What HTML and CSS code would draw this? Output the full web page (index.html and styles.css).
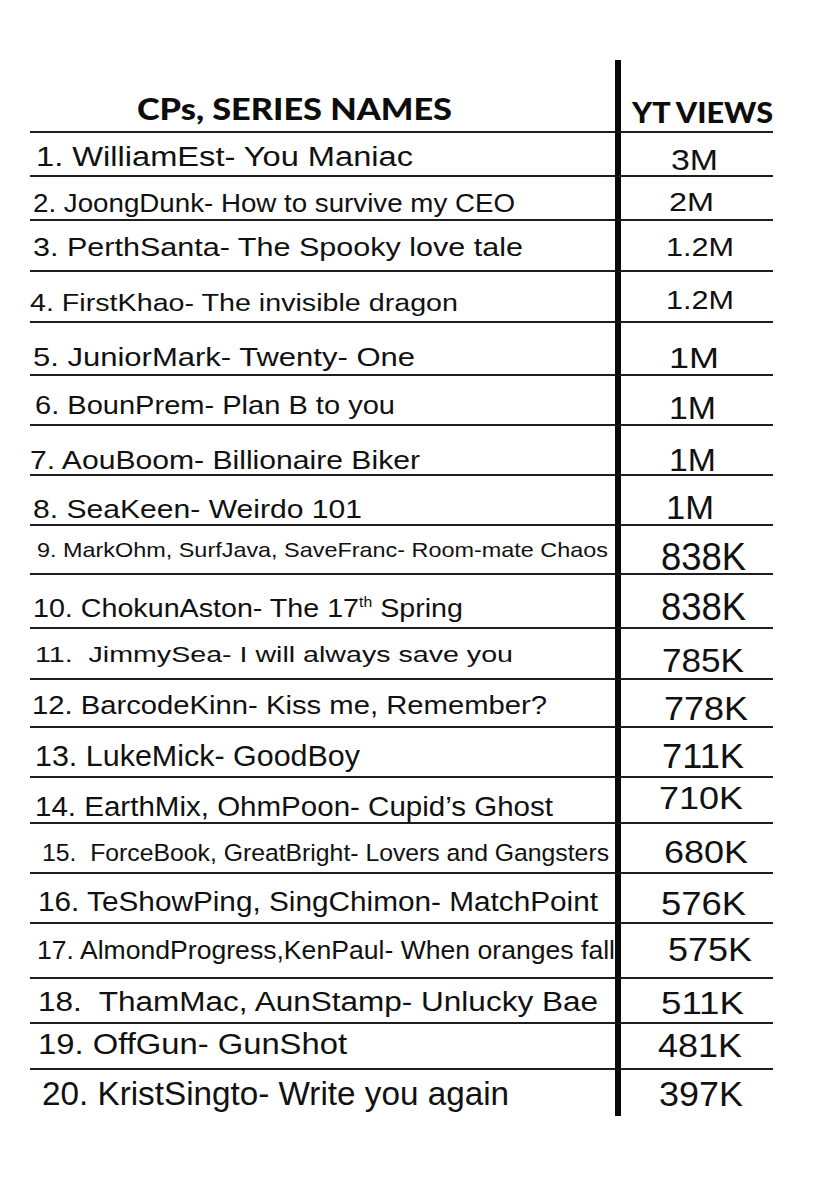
FILE: index.html
```html
<!DOCTYPE html>
<html lang="en">
<head>
<meta charset="utf-8">
<title>CPs, Series Names — YT Views</title>
<link rel="stylesheet" href="styles.css">
</head>
<body>
<main class="sheet">
  <div class="table">
    <div class="cell name head"><span class="fit hd" data-l="137" data-r="452" data-t="98.3" data-c="21.7">CPs, SERIES NAMES</span></div>
    <div class="cell val head"><span class="fit hd" data-l="626" data-r="767" data-t="103.3" data-c="20">YT VIEWS</span></div>

    <div class="cell name"><span class="fit" data-l="36" data-r="413" data-t="146.7" data-c="20">1. WilliamEst- You Maniac</span></div>
    <div class="cell val"><span class="fit" data-l="665" data-r="712" data-t="150" data-c="20.7">3M</span></div>

    <div class="cell name"><span class="fit" data-l="33" data-r="515" data-t="193" data-c="18.7">2. JoongDunk- How to survive my CEO</span></div>
    <div class="cell val"><span class="fit" data-l="663" data-r="708" data-t="193.3" data-c="18.4">2M</span></div>

    <div class="cell name"><span class="fit" data-l="33" data-r="523" data-t="238.3" data-c="18.4">3. PerthSanta- The Spooky love tale</span></div>
    <div class="cell val"><span class="fit" data-l="660" data-r="728" data-t="238.3" data-c="18.4">1.2M</span></div>

    <div class="cell name"><span class="fit" data-l="30" data-r="458" data-t="294" data-c="17.7">4. FirstKhao- The invisible dragon</span></div>
    <div class="cell val"><span class="fit" data-l="660" data-r="728" data-t="290.7" data-c="18.6">1.2M</span></div>

    <div class="cell name"><span class="fit" data-l="33" data-r="415" data-t="348.3" data-c="18.4">5. JuniorMark- Twenty- One</span></div>
    <div class="cell val"><span class="fit" data-l="663" data-r="713" data-t="346.7" data-c="21.6">1M</span></div>

    <div class="cell name"><span class="fit" data-l="35" data-r="395" data-t="396.7" data-c="18.3">6. BounPrem- Plan B to you</span></div>
    <div class="cell val"><span class="fit" data-l="663" data-r="710" data-t="396" data-c="23">1M</span></div>

    <div class="cell name"><span class="fit" data-l="30" data-r="420" data-t="451.7" data-c="18.3">7. AouBoom- Billionaire Biker</span></div>
    <div class="cell val"><span class="fit" data-l="663" data-r="710" data-t="450" data-c="22">1M</span></div>

    <div class="cell name"><span class="fit" data-l="33" data-r="362" data-t="499" data-c="19">8. SeaKeen- Weirdo 101</span></div>
    <div class="cell val"><span class="fit" data-l="660" data-r="708" data-t="495" data-c="24.3">1M</span></div>

    <div class="cell name"><span class="fit" data-l="37" data-r="608" data-t="544" data-c="14.3">9. MarkOhm, SurfJava, SaveFranc- Room-mate Chaos</span></div>
    <div class="cell val"><span class="fit" data-l="655" data-r="740" data-t="543.3" data-c="27.4">838K</span></div>

    <div class="cell name"><span class="fit" data-l="33" data-r="463" data-t="598" data-c="19">10. ChokunAston- The 17<sup class="th">th</sup> Spring</span></div>
    <div class="cell val"><span class="fit" data-l="655" data-r="740" data-t="591.7" data-c="28">838K</span></div>

    <div class="cell name"><span class="fit" data-l="35" data-r="513" data-t="646.7" data-c="16">11.  JimmySea- I will always save you</span></div>
    <div class="cell val"><span class="fit" data-l="656" data-r="738" data-t="648.3" data-c="24.3">785K</span></div>

    <div class="cell name"><span class="fit" data-l="32" data-r="547" data-t="695" data-c="19">12. BarcodeKinn- Kiss me, Remember?</span></div>
    <div class="cell val"><span class="fit" data-l="658" data-r="742" data-t="696" data-c="24">778K</span></div>

    <div class="cell name"><span class="fit" data-l="35" data-r="360" data-t="745" data-c="21">13. LukeMick- GoodBoy</span></div>
    <div class="cell val"><span class="fit" data-l="656" data-r="738" data-t="743.3" data-c="25">711K</span></div>

    <div class="cell name"><span class="fit" data-l="35" data-r="553" data-t="796.7" data-c="20">14. EarthMix, OhmPoon- Cupid’s Ghost</span></div>
    <div class="cell val"><span class="fit" data-l="653" data-r="737" data-t="788.3" data-c="22">710K</span></div>

    <div class="cell name"><span class="fit" data-l="42" data-r="609" data-t="845" data-c="16.7">15.  ForceBook, GreatBright- Lovers and Gangsters</span></div>
    <div class="cell val"><span class="fit" data-l="658" data-r="742" data-t="841.7" data-c="22">680K</span></div>

    <div class="cell name"><span class="fit" data-l="38" data-r="598" data-t="891.7" data-c="20">16. TeShowPing, SingChimon- MatchPoint</span></div>
    <div class="cell val"><span class="fit" data-l="655" data-r="740" data-t="891.7" data-c="23.3">576K</span></div>

    <div class="cell name"><span class="fit" data-l="37" data-r="615" data-t="941.7" data-c="18.3">17. AlmondProgress,KenPaul- When oranges fall</span></div>
    <div class="cell val"><span class="fit" data-l="662" data-r="746" data-t="938.3" data-c="23.3">575K</span></div>

    <div class="cell name"><span class="fit" data-l="38" data-r="598" data-t="991.7" data-c="20">18.  ThamMac, AunStamp- Unlucky Bae</span></div>
    <div class="cell val"><span class="fit" data-l="655" data-r="738" data-t="993.3" data-c="22">511K</span></div>

    <div class="cell name"><span class="fit" data-l="38" data-r="347" data-t="1033.3" data-c="21.7">19. OffGun- GunShot</span></div>
    <div class="cell val"><span class="fit" data-l="652" data-r="736" data-t="1033.3" data-c="24">481K</span></div>

    <div class="cell name last"><span class="fit" data-l="42" data-r="509" data-t="1081.7" data-c="23.3">20. KristSingto- Write you again</span></div>
    <div class="cell val last"><span class="fit" data-l="653" data-r="737" data-t="1081.7" data-c="25">397K</span></div>
  </div>
</main>
<script src="script.js"></script>
</body>
</html>
```

FILE: styles.css
```css
html, body {
  margin: 0;
  padding: 0;
  background: #ffffff;
}

.sheet {
  padding: 60px 0 0 30px;
}

.table {
  display: grid;
  grid-template-columns: 585px 158px;
  grid-template-rows: 73px 44px 44px 51px 51px 53px 50px 50px 50px 49px 54px 51px 48px 50px 46px 50px 50px 55px 45px 46px 46px;
  width: 743px;
}

.cell {
  box-sizing: border-box;
  display: flex;
  align-items: flex-start;
  border-bottom: 2px solid #1e1e1e;
  font-family: "Liberation Sans", Arial, sans-serif;
  color: #111111;
  overflow: visible;
}

.cell.last {
  border-bottom: none;
}

.val {
  border-left: 6px solid #0a0a0a;
}

.fit {
  display: inline-block;
  white-space: pre;
  line-height: 1;
  font-size: 26px;
  transform-origin: left top;
}

.hd {
  font-family: Lato, "Liberation Sans", sans-serif;
  font-weight: 900;
  color: #0d0d0d;
  font-size: 30px;
}

.th {
  font-size: 0.55em;
  line-height: 0;
  vertical-align: baseline;
  position: relative;
  top: -0.62em;
}
```

FILE: script.js
```js
(function () {
  var items = document.querySelectorAll('.fit');
  items.forEach(function (el) {
    var l = +el.dataset.l, r = +el.dataset.r, t = +el.dataset.t, c = +el.dataset.c;
    var head = el.classList.contains('hd');
    var capRatio = head ? 0.7165 : 0.716;
    var capOff = head ? 0.1705 : 0.1305;
    var f = c / capRatio;
    el.style.fontSize = f.toFixed(2) + 'px';
    var w = el.getBoundingClientRect().width;
    var s = (r - l) / w;
    el.style.transform = 'scaleX(' + s.toFixed(4) + ')';
    var cell = el.parentElement;
    var box = cell.getBoundingClientRect();
    cell.style.paddingLeft = (l - box.left).toFixed(1) + 'px';
    cell.style.paddingTop = (t - box.top - capOff * f).toFixed(1) + 'px';
  });
})();
```
